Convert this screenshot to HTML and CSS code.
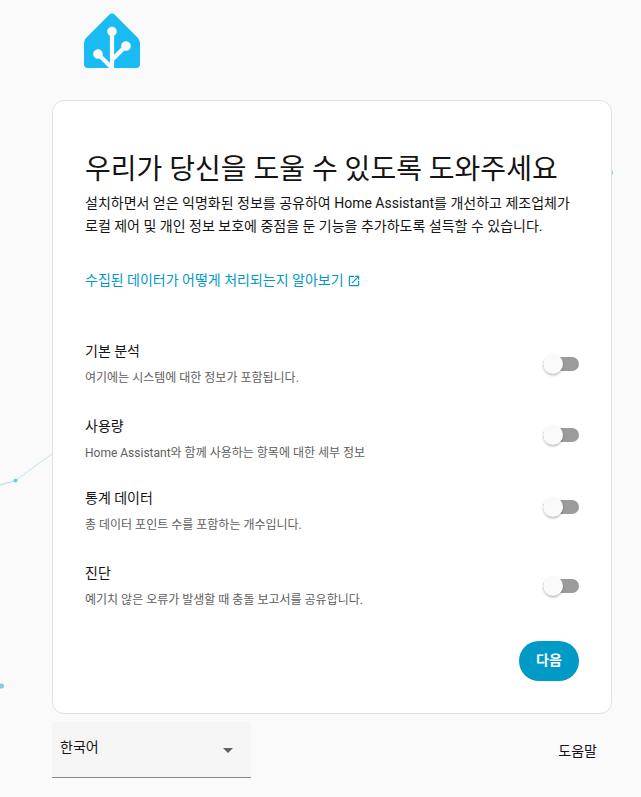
FILE: index.html
```html
<!DOCTYPE html>
<html lang="ko">
  <head>
    <meta charset="UTF-8" />
    <meta name="viewport" content="width=device-width, initial-scale=1.0" />
    <title>Home Assistant</title>
    <link rel="stylesheet" href="styles.css">
  </head>
  <body>
    <!-- Particles behind the card -->
    <svg class="particles" width="641" height="797" viewBox="0 0 641 797">
      <path d="M0 485L15.500 480.500" stroke="#a3dbec" fill="none" />
      <path d="M15.500 480.500L60 448" stroke="#bfe6f1" fill="none" />
      <circle cx="15.500" cy="480.500" r="2" fill="#6fcbe5" />
      <circle cx="1.500" cy="686" r="2.500" fill="#7dcde4" />
      <circle cx="610.500" cy="172.500" r="2.500" fill="#6bd0f5" />
    </svg>

    <div class="content">
      <div class="header">
        <svg class="logo" viewBox="0 0 240 240">
          <path d="M229.39 109.153L130.61 10.3725C124.78 4.5425 115.23 4.5425 109.4 10.3725L10.61 109.153C4.78 114.983 0 126.512 0 134.762V224.762C0 233.012 6.75 239.762 15 239.762H107.27L66.64 199.132C64.55 199.852 62.32 200.262 60 200.262C48.7 200.262 39.5 191.062 39.5 179.762C39.5 168.462 48.7 159.262 60 159.262C71.3 159.262 80.5 168.462 80.5 179.762C80.5 182.092 80.09 184.322 79.37 186.412L111 218.042V102.162C104.2 98.8225 99.5 91.8425 99.5 83.7725C99.5 72.4725 108.7 63.2725 120 63.2725C131.3 63.2725 140.5 72.4725 140.5 83.7725C140.5 91.8425 135.8 98.8225 129 102.162V183.432L160.46 151.972C159.84 150.012 159.5 147.932 159.5 145.772C159.5 134.472 168.7 125.272 180 125.272C191.3 125.272 200.5 134.472 200.5 145.772C200.5 157.072 191.3 166.272 180 166.272C177.5 166.272 175.12 165.802 172.91 164.982L129 208.892V239.772H225C233.25 239.772 240 233.022 240 224.772V134.772C240 126.522 235.23 115.002 229.39 109.162Z" />
        </svg>
      </div>

      <div class="card">
        <h1>우리가 당신을 도울 수 있도록 도와주세요</h1>
        <p class="intro">
          설치하면서 얻은 익명화된 정보를 공유하여 Home Assistant를 개선하고 제조업체가 로컬 제어 및 개인 정보 보호에 중점을 둔 기능을 추가하도록 설득할 수 있습니다.
        </p>
        <a class="learn-more" href="#">
          수집된 데이터가 어떻게 처리되는지 알아보기
          <svg viewBox="0 0 24 24">
            <path d="M14,3V5H17.59L7.76,14.83L9.17,16.24L19,6.41V10H21V3M19,19H5V5H12V3H5C3.89,3 3,3.9 3,5V19A2,2 0 0,0 5,21H19A2,2 0 0,0 21,19V12H19V19Z" />
          </svg>
        </a>

        <div class="settings">
          <div class="row">
            <div class="label">
              <div class="title">기본 분석</div>
              <div class="description">여기에는 시스템에 대한 정보가 포함됩니다.</div>
            </div>
            <div class="switch"></div>
          </div>
          <div class="row nested">
            <div class="label">
              <div class="title">사용량</div>
              <div class="description">Home Assistant와 함께 사용하는 항목에 대한 세부 정보</div>
            </div>
            <div class="switch"></div>
          </div>
          <div class="row nested last">
            <div class="label">
              <div class="title">통계 데이터</div>
              <div class="description">총 데이터 포인트 수를 포함하는 개수입니다.</div>
            </div>
            <div class="switch"></div>
          </div>
          <div class="row">
            <div class="label">
              <div class="title">진단</div>
              <div class="description">예기치 않은 오류가 발생할 때 충돌 보고서를 공유합니다.</div>
            </div>
            <div class="switch"></div>
          </div>
        </div>

        <div class="footer">
          <button class="next">다음</button>
        </div>
      </div>

      <div class="bottom">
        <div class="language">
          <span>한국어</span>
          <svg width="10" height="5" viewBox="0 0 10 5"><path d="M0 0L5 5L10 0Z" /></svg>
        </div>
        <a class="help" href="#">도움말</a>
      </div>
    </div>
  </body>
</html>
```
FILE: styles.css
```css
body {
  font-family: Roboto, "Noto Sans CJK KR", sans-serif;
  font-size: 14px;
  margin: 0;
  background-color: #fafafa;
  color: #141414;
}

.particles {
  position: absolute;
  top: 0;
  left: 0;
  z-index: -1;
}

.content {
  width: 560px;
  margin-left: 52px;
}

.header {
  height: 88px;
  padding: 12px 32px 0;
}

.logo {
  display: block;
  width: 56px;
  height: 56px;
  fill: #18bcf2;
}

.card {
  box-sizing: border-box;
  height: 614px;
  padding: 51px 32px 32px;
  background-color: white;
  border: 1px solid #e0e0e0;
  border-radius: 12px;
}

h1 {
  margin: 0;
  font-size: 28px;
  font-weight: 400;
  line-height: 36px;
}

.intro {
  margin: 4px 0 0;
  line-height: 23px;
  word-break: keep-all;
}

.learn-more {
  display: flex;
  align-items: center;
  gap: 3px;
  height: 24px;
  margin-top: 29px;
  color: #009ac7;
  text-decoration: none;
}

.learn-more svg {
  width: 14px;
  height: 14px;
  margin-top: 3px;
  fill: #009ac7;
}

.settings {
  margin-top: 47px;
}

.row {
  display: flex;
  justify-content: space-between;
  align-items: center;
  height: 52px;
  margin-bottom: 23px;
}

.title {
  line-height: 26px;
}

.description {
  padding-top: 2px;
  font-size: 12px;
  line-height: 24px;
  color: #5e5e5e;
}

.switch {
  display: flex;
  align-items: center;
  width: 36px;
  height: 14px;
  border-radius: 7px;
  background-color: #9b9b9b;
}

.switch::before {
  content: "";
  width: 20px;
  height: 20px;
  border-radius: 50%;
  background-color: #fafafa;
  box-shadow: 0 2px 3px -1px rgba(0, 0, 0, 0.3), 0 1px 3px rgba(0, 0, 0, 0.08);
}

/* Sub settings have their switch a bit higher */
.nested .switch {
  margin-bottom: 8px;
}

.nested:not(.last) {
  margin-bottom: 20px;
}

.footer {
  display: flex;
  justify-content: flex-end;
  margin-top: 29px;
}

.next {
  width: 60px;
  height: 40px;
  padding: 0 0 4px;
  border: none;
  border-radius: 20px;
  background-color: #009ac7;
  color: white;
  font-family: inherit;
  font-size: 14px;
  font-weight: 700;
}

.bottom {
  display: flex;
  justify-content: space-between;
  align-items: center;
  margin-top: 8px;
}

.language {
  box-sizing: border-box;
  display: flex;
  justify-content: space-between;
  align-items: center;
  width: 199px;
  height: 56px;
  padding: 0 18px 7px 8px;
  border-bottom: 1px solid #8a8a8a;
  border-radius: 4px 4px 0 0;
  background-color: #f5f5f5;
}

.language svg {
  margin-top: 8px;
  fill: #616161;
}

.help {
  padding-right: 15px;
  color: #141414;
  text-decoration: none;
}
```
